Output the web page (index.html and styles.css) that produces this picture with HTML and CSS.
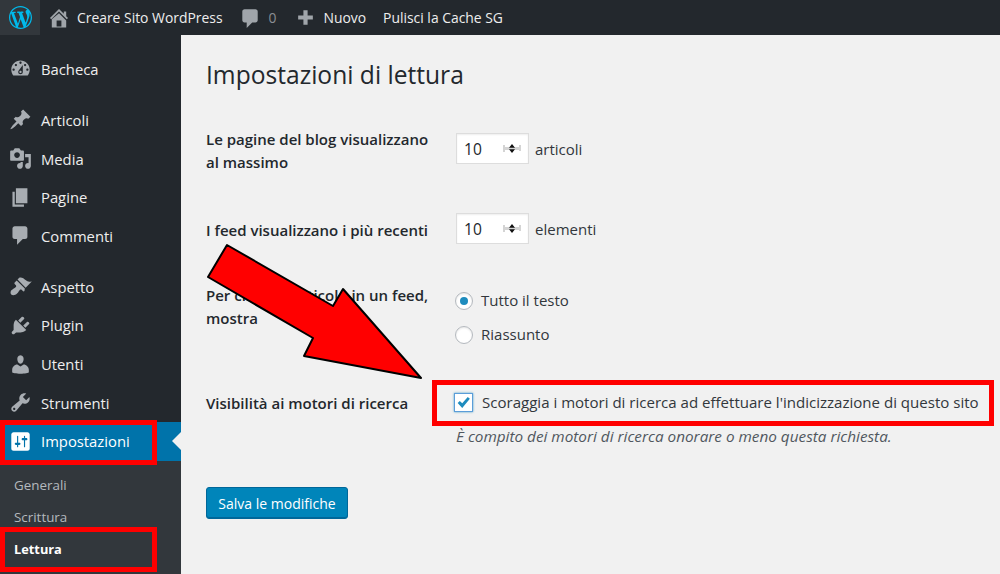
FILE: index.html
```html
<!DOCTYPE html>
<html lang="it">
<head>
<meta charset="utf-8">
<title>Impostazioni di lettura</title>
<link rel="stylesheet" href="styles.css">
</head>
<body>
<header class="topbar">
  <a class="logo-tile"><svg class="logo" viewBox="0 0 20 20"><path d="M20 10c0-5.51-4.49-10-10-10C4.48 0 0 4.49 0 10c0 5.52 4.48 10 10 10 5.51 0 10-4.48 10-10zM7.78 15.37L4.37 6.22c.55-.02 1.17-.08 1.17-.08.5-.06.44-1.13-.06-1.11 0 0-1.45.11-2.37.11-.18 0-.37 0-.58-.01C4.12 2.69 6.87 1.11 10 1.11c2.33 0 4.45.87 6.05 2.34-.68-.11-1.65.39-1.65 1.58 0 .74.45 1.36.9 2.1.35.61.55 1.36.55 2.46 0 1.49-1.4 5-1.4 5l-3.03-8.37c.54-.02.82-.17.82-.17.5-.05.44-1.25-.06-1.22 0 0-1.44.12-2.38.12-.87 0-2.33-.12-2.33-.12-.5-.03-.56 1.2-.06 1.22l.92.08 1.26 3.41zM17.41 10c.24-.64.74-1.87.43-4.25.7 1.29 1.05 2.71 1.05 4.25 0 3.29-1.73 6.24-4.4 7.78.97-2.59 1.94-5.2 2.92-7.78zM6.1 18.09C3.12 16.65 1.11 13.53 1.11 10c0-1.3.23-2.48.72-3.59C3.25 10.3 4.67 14.2 6.1 18.09zm4.03-6.63l2.58 6.98c-.86.29-1.76.45-2.71.45-.79 0-1.57-.11-2.29-.33.81-2.38 1.62-4.74 2.42-7.1z"/></svg></a>
  <a class="top-item site"><svg class="top-icon home-icon" viewBox="0 0 20 20"><path d="M16 8.5l1.53 1.53-1.06 1.06L10 4.62l-6.47 6.47-1.06-1.06L10 2.5l4 4v-2h2v4zm-6-2.46l6 5.99V18H4v-6.97zM12 17v-5H8v5h4z"/></svg>Creare Sito WordPress</a>
  <a class="top-item comments"><svg class="top-icon comment-icon" viewBox="0 0 20 20"><path d="M5 2h10c1.1 0 2 .9 2 2v8c0 1.1-.9 2-2 2h-3l-5 5v-5H5c-1.1 0-2-.9-2-2V4c0-1.100.9-2 2-2z"/></svg><span class="count">0</span></a>
  <a class="top-item new"><svg class="top-icon plus-icon" viewBox="0 0 20 20"><path d="M17 8v4h-5v5H8v-5H3V8h5V3h4v5h5z"/></svg>Nuovo</a>
  <a class="top-item cache">Pulisci la Cache SG</a>
</header>
<div class="layout">
  <nav class="sidebar">
    <ul class="group first">
      <li class="item"><svg class="icon" viewBox="0 0 20 20"><path d="M3.76 16h12.48c1.1-1.37 1.76-3.11 1.76-5 0-4.420-3.580-8-8-8s-8 3.580-8 8c0 1.890.66 3.630 1.760 5zM10 4c.55 0 1 .45 1 1s-.45 1-1 1-1-.45-1-1 .45-1 1-1zM6 6c.55 0 1 .45 1 1s-.45 1-1 1-1-.45-1-1 .45-1 1-1zm8 0c.55 0 1 .45 1 1s-.45 1-1 1-1-.45-1-1 .45-1 1-1zm-5.370 5.550L12 7v6c0 1.100-.9 2-2 2s-2-.9-2-2c0-.57.24-1.080.63-1.450zM4 10c.55 0 1 .45 1 1s-.45 1-1 1-1-.45-1-1 .45-1 1-1zm12 0c.55 0 1 .45 1 1s-.45 1-1 1-1-.45-1-1 .45-1 1-1zm-5 3c0-.55-.45-1-1-1s-1 .45-1 1 .45 1 1 1 1-.45 1-1z" fill-rule="evenodd"/></svg>Bacheca</li>
    </ul>
    <ul class="group">
      <li class="item"><svg class="icon" viewBox="0 0 20 20"><path d="M10.440 3.020l1.820-1.820 6.360 6.350-1.830 1.820c-1.050-.68-2.480-.57-3.410.36l-.75.75c-.92.93-1.040 2.350-.35 3.410l-1.830 1.820-2.410-2.410-2.800 2.790c-.42.42-3.380 2.710-3.800 2.290s1.860-3.390 2.280-3.810l2.790-2.790L4.100 9.360l1.830-1.820c1.050.69 2.480.57 3.400-.36l.75-.75c.93-.92 1.050-2.350.36-3.410z"/></svg>Articoli</li>
      <li class="item"><svg class="icon" viewBox="0 0 20 20"><path d="M13 11V4c0-.55-.45-1-1-1h-1.670L9 1H5L3.670 3H2c-.55 0-1 .45-1 1v7c0 .55.45 1 1 1h10c.55 0 1-.45 1-1zM7 4.500c1.380 0 2.500 1.120 2.500 2.500S8.380 9.500 7 9.500 4.500 8.380 4.500 7 5.620 4.500 7 4.500zM14 6h5v10.500c0 1.380-1.120 2.500-2.500 2.500S14 17.880 14 16.500s1.120-2.500 2.500-2.500c.17 0 .34.02.5.05V9h-3V6zm-4 8.050V13h2v3.500c0 1.380-1.120 2.500-2.500 2.500S7 17.880 7 16.500 8.120 14 9.500 14c.17 0 .34.02.5.05z"/></svg>Media</li>
      <li class="item"><svg class="icon" viewBox="0 0 20 20"><path d="M6 15V2h10v13H6zm-1 1h8v2H3V5h2v11z"/></svg>Pagine</li>
      <li class="item"><svg class="icon" viewBox="0 0 20 20"><path d="M5 2h9c1.100 0 2 .9 2 2v7c0 1.100-.9 2-2 2h-2l-5 5v-5H5c-1.100 0-2-.9-2-2V4c0-1.100.9-2 2-2z"/></svg>Commenti</li>
    </ul>
    <ul class="group">
      <li class="item"><svg class="icon" viewBox="0 0 20 20"><path d="M14.480 11.060L7.410 3.990l1.500-1.500c.5-.56 2.300-.47 3.510.32 1.210.8 1.430 1.280 2.910 2.100 1.180.64 2.450 1.260 4.450.85zm-.71.71L6.700 4.700 4.930 6.470c-.39.39-.39 1.020 0 1.410l1.060 1.060c.39.39.39 1.030 0 1.420-.6.6-1.430 1.110-2.210 1.690-.35.26-.7.53-1.010.84C1.430 13.230.91 15.650 1.910 17c1.350 1 3.770.48 5.110-.86.31-.31.58-.66.84-1.010.58-.78 1.090-1.610 1.690-2.210.39-.39 1.030-.39 1.420 0l1.060 1.060c.39.39 1.020.39 1.410 0z"/></svg>Aspetto</li>
      <li class="item"><svg class="icon" viewBox="0 0 20 20"><path d="M13.110 4.360L9.870 7.600 8 5.730l3.240-3.240c.35-.34 1.050-.2 1.560.32.52.51.66 1.210.31 1.550zm-8 1.770l.91-1.120 9.010 9.010-1.190.84c-.71.71-2.630 1.160-3.820 1.160H6.140L4.900 17.260c-.59.59-1.540.59-2.120 0-.59-.58-.59-1.530 0-2.120l1.240-1.240v-3.880c0-1.130.4-3.190 1.090-3.890zm7.260 3.970l3.240-3.240c.34-.35 1.040-.21 1.550.31.52.51.66 1.210.31 1.550l-3.240 3.250z"/></svg>Plugin</li>
      <li class="item"><svg class="icon" viewBox="0 0 20 20"><path d="M10 9.250c-2.270 0-2.730-3.440-2.730-3.440C7 4.020 7.820 2 9.970 2c2.160 0 2.980 2.020 2.710 3.810 0 0-.41 3.440-2.680 3.440zm0 2.570L12.720 10c2.390 0 4.520 2.330 4.520 4.530v2.490s-3.650 1.130-7.240 1.130c-3.650 0-7.240-1.130-7.240-1.130v-2.490c0-2.250 1.940-4.530 4.470-4.530z"/></svg>Utenti</li>
      <li class="item"><svg class="icon" viewBox="0 0 20 20"><path d="M16.680 9.770c-1.340 1.340-3.300 1.670-4.950.99l-5.410 6.520c-.99.99-2.590.99-3.580 0s-.99-2.590 0-3.570l6.520-5.420c-.68-1.650-.35-3.610.99-4.950 1.280-1.280 3.120-1.620 4.720-1.060l-2.890 2.890 2.820 2.820 2.860-2.870c.53 1.580.18 3.390-1.080 4.650zM3.810 16.210c.4.39 1.040.39 1.430 0 .4-.4.4-1.040 0-1.430-.39-.4-1.030-.4-1.430 0-.39.39-.39 1.030 0 1.430z"/></svg>Strumenti</li>
      <li class="item current"><svg class="icon" viewBox="0 0 20 20"><path d="M18 16V4c0-1.100-.9-2-2-2H4c-1.100 0-2 .9-2 2v12c0 1.100.9 2 2 2h12c1.100 0 2-.9 2-2zM8 11h1c.55 0 1 .45 1 1s-.45 1-1 1H8v1.500c0 .28-.22.5-.5.5s-.5-.22-.5-.5V13H6c-.55 0-1-.45-1-1s.45-1 1-1h1V5.500c0-.28.22-.5.5-.5s.5.22.5.5V11zm5-2h-1c-.55 0-1-.45-1-1s.45-1 1-1h1V5.500c0-.28.22-.5.5-.5s.5.22.5.5V7h1c.55 0 1 .45 1 1s-.45 1-1 1h-1v5.500c0 .28-.22.5-.5.5s-.5-.22-.5-.5V9z"/></svg>Impostazioni</li>
    </ul>
    <ul class="submenu">
      <li class="sub-item">Generali</li>
      <li class="sub-item">Scrittura</li>
      <li class="sub-item active">Lettura</li>
    </ul>
  </nav>
  <main class="content">
    <h1 class="title">Impostazioni di lettura</h1>
    <form class="settings">
      <div class="row row-posts">
        <div class="label">Le pagine del blog visualizzano<br>al massimo</div>
        <div class="field field-num">
          <div class="number"><span>10</span><svg class="spin" viewBox="0 0 18 9"><path class="spin-bg" d="M0 1h2v2h16v3H2v2H0zM16 1h2v6h-2z"/><path d="M9 0l3 3.700H6zM9 9L6 5.300h6z"/></svg></div>
          <span class="unit">articoli</span>
        </div>
      </div>
      <div class="row row-feed">
        <div class="label label-mid">I feed visualizzano i più recenti</div>
        <div class="field-num field">
          <div class="number"><span>10</span><svg class="spin" viewBox="0 0 18 9"><path class="spin-bg" d="M0 1h2v2h16v3H2v2H0zM16 1h2v6h-2z"/><path d="M9 0l3 3.700H6zM9 9L6 5.300h6z"/></svg></div>
          <span class="unit">elementi</span>
        </div>
      </div>
      <div class="row row-show">
        <div class="label">Per ciascun articolo in un feed, mostra</div>
        <div class="field radios">
          <div class="choice"><span class="radio checked"></span>Tutto il testo</div>
          <div class="choice"><span class="radio"></span>Riassunto</div>
        </div>
      </div>
      <div class="row row-search">
        <div class="label">Visibilità ai motori di ricerca</div>
        <div class="field field-search">
          <div class="choice check-line"><span class="checkbox"><svg viewBox="0 0 16 16"><path d="M2.500 8.500l2-2 2.300 2.300L12 2.800l2 1.700-7.200 8.700z"/></svg></span>Scoraggia i motori di ricerca ad effettuare l'indicizzazione di questo sito</div>
          <p class="hint">È compito dei motori di ricerca onorare o meno questa richiesta.</p>
        </div>
      </div>
      <button class="save" type="button">Salva le modifiche</button>
    </form>
  </main>
</div>
<div class="mark mark-menu"></div>
<div class="mark mark-sub"></div>
<div class="mark mark-check"></div>
<svg class="arrow" viewBox="0 0 1000 574"><polygon points="227,245 333,306 343,289 421,378 304,356 313,338 208,277"/></svg>
</body>
</html>
```
FILE: styles.css
```css
* { box-sizing: border-box; }
html, body { margin: 0; height: 100%; }
body {
  position: relative;
  height: 574px;
  overflow: hidden;
  background: #f1f1f1;
  color: #23282d;
  font-family: "Open Sans", "Noto Sans", "Liberation Sans", sans-serif;
  font-size: 15px;
  display: flex;
  flex-direction: column;
}
ul { list-style: none; margin: 0; padding: 0; }

.topbar {
  flex: 0 0 35px;
  display: flex;
  align-items: center;
  background: #23282d;
  color: #eee;
  font-size: 13.9px;
}
.logo-tile {
  width: 40px;
  height: 35px;
  background: #32373c;
  display: flex;
  align-items: center;
  justify-content: center;
}
.logo { width: 23px; height: 23px; fill: #00b9eb; }
.top-item { display: flex; align-items: center; white-space: nowrap; }
.top-icon { fill: #a0a5aa; flex: none; }
.home-icon { width: 24px; height: 24px; margin-right: 6px; }
.comment-icon { width: 22px; height: 22px; margin-right: 8px; }
.plus-icon { width: 21px; height: 21px; margin-right: 7px; }
.site { margin-left: 7px; }
.comments { margin-left: 16px; }
.count { color: #8b8f94; }
.new { margin-left: 19px; }
.cache { margin-left: 17px; }

.layout { flex: 1; display: flex; min-height: 0; }
.sidebar {
  width: 181px;
  flex: none;
  background: #23282d;
  color: #eee;
  padding-top: 14.6px;
  display: flex;
  flex-direction: column;
}
.group { margin-bottom: 12.5px; }
.group:nth-child(3) { margin-bottom: 0; }
.item {
  position: relative;
  height: 38.6px;
  display: flex;
  align-items: center;
  font-size: 14.8px;
  padding-left: 8.5px;
}
.icon { width: 23px; height: 23px; fill: #a8adb2; margin-right: 9.5px; flex: none; }
.item.current { background: #0073aa; color: #fff; }
.item.current .icon { fill: #fff; }
.item.current::after {
  content: "";
  position: absolute;
  right: 0;
  top: 50%;
  margin-top: -9px;
  border: 9px solid transparent;
  border-left-width: 0;
  border-right-color: #f1f1f1;
}
.submenu { flex: 1; background: #32373c; padding-top: 8px; }
.sub-item { height: 32px; display: flex; align-items: center; padding-left: 14px; font-size: 13.4px; color: #b4b9be; }
.sub-item.active { color: #fff; font-weight: 700; font-size: 12.8px; }

.content { flex: 1; padding: 0 0 0 25px; min-width: 0; }
.title { margin: 23px 0 0; font-size: 24.6px; font-weight: 400; line-height: 34px; color: #23282d; }

.settings { margin-top: 36px; }
.row { display: flex; align-items: flex-start; }
.label { width: 250px; padding-right: 20px; font-weight: 600; line-height: 23px; flex: none; }
.label-mid { padding-top: 6px; }
.row-feed { margin-top: 39px; }
.row-show { margin-top: 40px; }
.row-search { margin-top: 46px; }
.field-search { margin-top: -1px; }
.field-num { display: flex; align-items: center; gap: 6px; }
.row-posts .field-num { margin-top: 5px; }
.number {
  width: 73px;
  height: 31px;
  background: #fff;
  border: 1px solid #ddd;
  box-shadow: inset 0 1px 2px rgba(0, 0, 0, .07);
  display: flex;
  align-items: center;
  justify-content: space-between;
  padding: 0 7px 0 7px;
  font-size: 15.6px;
}
.spin { width: 18px; height: 9px; fill: #111; }
.spin-bg { fill: #d4d4d4; }
.unit { color: #32373c; }

.radios { display: flex; flex-direction: column; gap: 11px; padding-top: 5px; }
.choice { display: flex; align-items: center; line-height: 23px; color: #32373c; white-space: nowrap; }
.radio {
  position: relative;
  width: 18px;
  height: 18px;
  margin-left: -1px;
  margin-right: 8px;
  border-radius: 50%;
  background: #fff;
  border: 1px solid #b4b9be;
  box-shadow: inset 0 1px 2px rgba(0, 0, 0, .1);
}
.radio.checked::after {
  content: "";
  position: absolute;
  left: 4px;
  top: 4px;
  width: 8px;
  height: 8px;
  border-radius: 50%;
  background: #1e8cbe;
}
.check-line { font-size: 15.06px; }
.checkbox {
  width: 19px;
  height: 19px;
  margin-left: -2px;
  margin-right: 9px;
  background: #fff;
  border: 1px solid #5b9dd9;
  box-shadow: 0 0 2px rgba(30, 140, 190, .8);
  display: flex;
  align-items: center;
  justify-content: center;
}
.checkbox svg { width: 17px; height: 17px; fill: #1e8cbe; }
.hint { margin: 11px 0 0; font-style: italic; font-size: 15.3px; line-height: 22px; color: #50575e; white-space: nowrap; }

.save {
  margin-top: 40px;
  width: 142px;
  height: 32px;
  padding: 0;
  background: #0085ba;
  border: 1px solid #006799;
  border-radius: 3px;
  color: #fff;
  font: inherit;
  font-size: 14px;
  box-shadow: inset 0 -1px 0 #006799;
}

.mark { position: absolute; border: 5px solid #f00; }
.mark-menu { left: 0; top: 420px; width: 157px; height: 45px; }
.mark-sub { left: 0; top: 527px; width: 157px; height: 45px; }
.mark-check { left: 432px; top: 380px; width: 562px; height: 46px; }
.arrow { position: absolute; left: 0; top: 0; width: 1000px; height: 574px; pointer-events: none; }
.arrow polygon { fill: #f00; stroke: #000; stroke-width: 2; stroke-linejoin: round; }
```
